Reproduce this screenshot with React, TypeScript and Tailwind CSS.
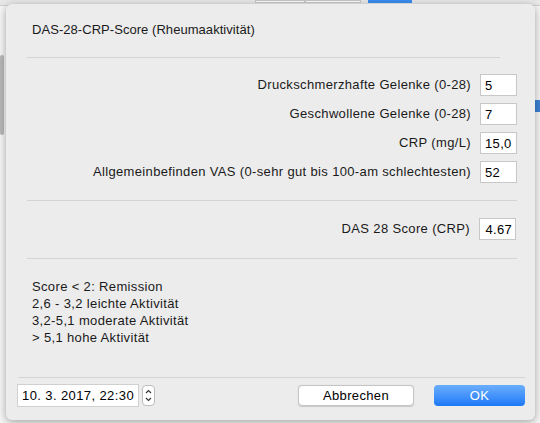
const rows = [
  { label: "Druckschmerzhafte Gelenke (0-28)", value: "5" },
  { label: "Geschwollene Gelenke (0-28)", value: "7" },
  { label: "CRP (mg/L)", value: "15,0" },
  { label: "Allgemeinbefinden VAS (0-sehr gut bis 100-am schlechtesten)", value: "52" },
]

const legend = [
  "Score < 2: Remission",
  "2,6 - 3,2 leichte Aktivität",
  "3,2-5,1 moderate Aktivität",
  "> 5,1 hohe Aktivität",
]

function Field({ value }: { value: string }) {
  return (
    <div className="w-[37px] h-[22px] bg-white border border-[#c8c8c8] px-[4px] pt-[3px] text-[13px] leading-[16px] tracking-[0.35px] text-black">
      {value}
    </div>
  )
}

export default function App() {
  return (
    <div
      className="relative w-[540px] h-[423px] overflow-hidden bg-[#f6f6f6] text-[#1a1a1a]"
      style={{ fontFamily: '"Liberation Sans", Arial, sans-serif' }}
    >
      {/* background window glimpses */}
      <div className="absolute left-0 top-0 w-[540px] h-[6px] bg-[#e8e8e8] border-b border-[#d0d0d0]" />
      <div className="absolute left-[255px] top-0 w-[50px] h-[3px] bg-white border border-[#c8c8c8]" />
      <div className="absolute left-[305px] top-0 w-[56px] h-[3px] bg-white border border-[#c8c8c8]" />
      <div className="absolute left-[368px] top-0 w-[44px] h-[3px] bg-[#3b8ef0]" />
      <div className="absolute left-0 top-[55px] w-[4px] h-[80px] rounded bg-[#b8b8b8]" />
      <div className="absolute right-0 top-[100px] w-[5px] h-[12px] bg-[#3b82d6]" />

      <div className="absolute left-[6px] top-[4px] w-[529px] h-[416px] rounded-[6px] bg-[#ececec] shadow-[0_2px_8px_rgba(0,0,0,0.35)] flex flex-col">
        <div className="pl-[26px] pt-[18px] text-[13px] leading-[16px] tracking-[0.05px]">DAS-28-CRP-Score (Rheumaaktivität)</div>

        <div className="ml-[21px] mr-[35px] mt-[19px] border-t border-[#d4d4d4]" />

        <div className="flex flex-col gap-[7px] pt-[16px] pr-[18px]">
          {rows.map((r) => (
            <div key={r.label} className="flex items-center justify-end gap-[9px]">
              <span className="text-[13px] leading-[16px] tracking-[0.35px]">{r.label}</span>
              <Field value={r.value} />
            </div>
          ))}
        </div>

        <div className="ml-[21px] mr-[18px] mt-[17px] border-t border-[#d4d4d4]" />

        <div className="flex items-center justify-end gap-[9px] pt-[17px] pr-[19px]">
          <span className="text-[13px] leading-[16px] tracking-[0.35px]">DAS 28 Score (CRP)</span>
          <div className="w-[37px] h-[22px] bg-white border border-[#c8c8c8] pr-[3px] pt-[3px] text-right text-[13px] leading-[16px] tracking-[0.3px] text-black">
            4.67
          </div>
        </div>

        <div className="ml-[21px] mr-[18px] mt-[18px] border-t border-[#d4d4d4]" />

        <div className="pl-[26px] pt-[19px] flex flex-col text-[13px] leading-[17px] tracking-[0.35px]">
          {legend.map((l) => (
            <span key={l}>{l}</span>
          ))}
        </div>

        <div className="ml-[12px] mr-[10px] mt-[31px] border-t border-[#d4d4d4]" />

        <div className="flex items-center pl-[11px] pr-[10px] pt-[6px]">
          <div className="w-[122px] h-[23px] bg-white border border-[#d0d0d0] pl-[4px] pt-[3px] text-[13px] leading-[16px] tracking-[0.4px] text-black whitespace-nowrap">
            10. 3. 2017, 22:30
          </div>
          <div className="ml-[3px] w-[13px] h-[21px] rounded-[4px] bg-white border border-[#bdbdbd] flex flex-col items-center justify-center">
            <svg width="7" height="15" viewBox="0 0 7 15" fill="none" stroke="#333" strokeWidth="1.1">
              <path d="M1 5 L3.5 2.5 L6 5" />
              <path d="M1 10 L3.5 12.5 L6 10" />
            </svg>
          </div>
          <div className="flex-1" />
          <button className="w-[116px] h-[21px] rounded-[4px] bg-white border border-[#c4c4c4] shadow-[0_0.5px_1px_rgba(0,0,0,0.15)] text-[13px] leading-[16px] tracking-[0.35px] text-black">
            Abbrechen
          </button>
          <button className="ml-[20px] w-[91px] h-[21px] rounded-[4px] bg-gradient-to-b from-[#6aaefc] to-[#1a78f8] text-[13px] leading-[16px] tracking-[0.35px] text-white">
            OK
          </button>
        </div>
      </div>
    </div>
  )
}
